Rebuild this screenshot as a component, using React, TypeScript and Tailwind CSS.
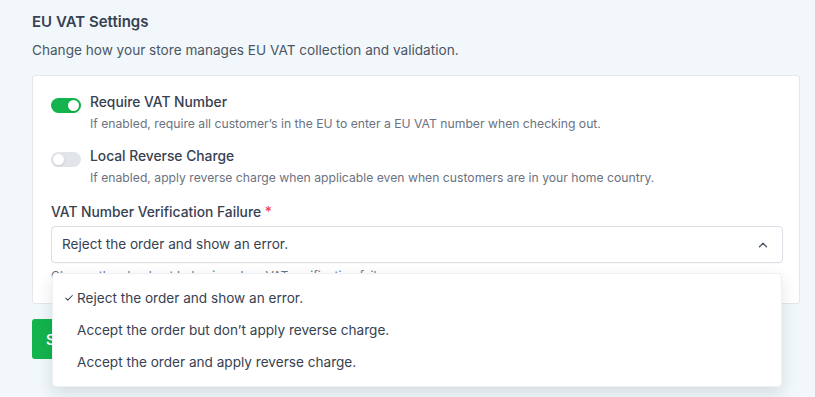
import { Check, ChevronUp } from 'lucide-react'

function Toggle({ on }: { on: boolean }) {
  return (
    <span
      className={`relative inline-flex h-[15px] w-[30px] shrink-0 items-center rounded-full ${
        on ? 'bg-[#13b34d]' : 'bg-[#e1e4e8]'
      }`}
    >
      <span
        className={`absolute top-[2px] h-[11px] w-[11px] rounded-full bg-white shadow-sm ${
          on ? 'left-[17px]' : 'left-[2px]'
        }`}
      />
    </span>
  )
}

function ToggleRow({ on, label, help }: { on: boolean; label: string; help: string }) {
  return (
    <div className="flex gap-[9px]">
      <div className="pt-[3px]">
        <Toggle on={on} />
      </div>
      <div>
        <p className="text-[13.8px] leading-5 font-medium text-[#374151]">{label}</p>
        <p className="mt-[3px] text-[12.2px] leading-[18px] text-[#6b7280]">{help}</p>
      </div>
    </div>
  )
}

const options = [
  'Reject the order and show an error.',
  'Accept the order but don’t apply reverse charge.',
  'Accept the order and apply reverse charge.',
]

export default function App() {
  return (
    <div className="min-h-screen bg-[#f1f7fa] pt-[10px] pr-[15px] pl-8 font-['Inter',sans-serif]">
      <h2 className="text-[15px] leading-6 font-semibold text-[#374151]">EU VAT Settings</h2>
      <p className="mt-[6px] text-[13.6px] leading-5 text-[#4b5563]">
        Change how your store manages EU VAT collection and validation.
      </p>

      <div className="mt-[15px] rounded-[3px] border border-[#e3e6eb] bg-white pt-[16px] pr-[16px] pb-[18px] pl-[18px]">
        <ToggleRow
          on
          label="Require VAT Number"
          help="If enabled, require all customer’s in the EU to enter a EU VAT number when checking out."
        />
        <div className="mt-[13px]">
          <ToggleRow
            on={false}
            label="Local Reverse Charge"
            help="If enabled, apply reverse charge when applicable even when customers are in your home country."
          />
        </div>

        <p className="mt-[15px] text-[13.8px] leading-5 font-medium text-[#374151]">
          VAT Number Verification Failure <span className="text-[#ef4444]">*</span>
        </p>
        <div className="relative mt-[4px]">
          <div className="flex h-[37px] items-center justify-between rounded-[4px] border border-[#dcdfe5] bg-white pr-[12px] pl-[10px] shadow-[0_1px_1px_rgba(0,0,0,0.03)]">
            <span className="text-[13.6px] text-[#374151]">{options[0]}</span>
            <ChevronUp className="h-[14px] w-[14px] text-[#4b5563]" strokeWidth={2.2} />
          </div>
          <div className="absolute top-[47px] right-px left-px z-10 rounded-[4px] border border-[#eef0f3] bg-white py-[8px] shadow-[0_6px_16px_rgba(15,40,60,0.12)]">
            {options.map((o, i) => (
              <div key={o} className="flex h-8 items-center pl-[11px] text-[13.6px] text-[#374151]">
                <span className="w-[13px]">
                  {i === 0 && <Check className="h-[10px] w-[10px] text-[#374151]" strokeWidth={2.5} />}
                </span>
                {o}
              </div>
            ))}
          </div>
        </div>
        <p className="mt-[4px] text-[12.2px] leading-[18px] text-[#6b7280]">
          Choose the checkout behavior when VAT verification fails.
        </p>
      </div>

      <button className="mt-[15px] h-10 rounded-[3px] bg-[#13b34d] px-[14px] text-[14px] font-semibold text-white">
        Save
      </button>
    </div>
  )
}
